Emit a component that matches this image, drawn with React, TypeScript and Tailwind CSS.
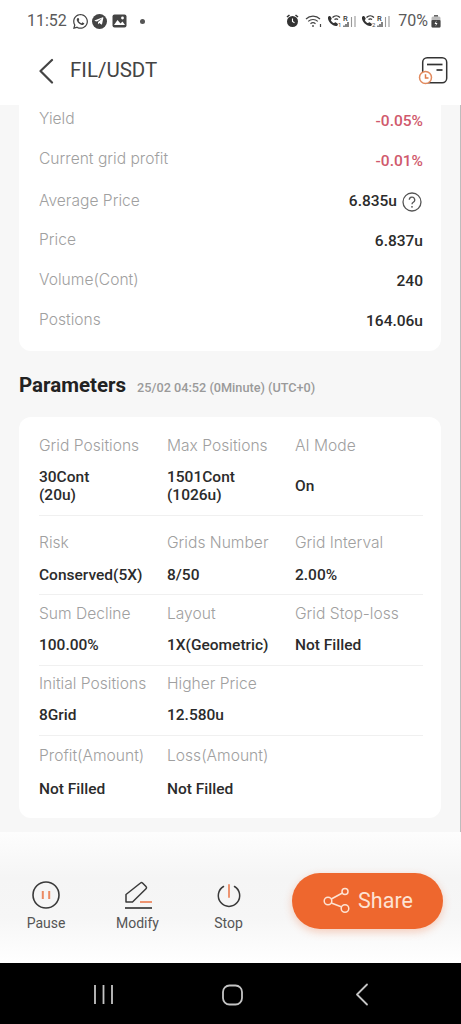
import { FaWhatsapp, FaTelegramPlane } from "react-icons/fa";

const summary = [
    { label: "Yield", value: "-0.05%", red: true, shift: "-mt-[6px]" },
    { label: "Current grid profit", value: "-0.01%", red: true, shift: "-mt-[6px]" },
    { label: "Average Price", value: "6.835u", help: true, shift: "-mt-[2px]" },
    { label: "Price", value: "6.837u", shift: "-mt-[4px]" },
    { label: "Volume(Cont)", value: "240", shift: "-mt-[4px]" },
    { label: "Postions", value: "164.06u", shift: "-mt-[4px]" },
];

const Label = ({ children }: { children: string }) => (
    <div className="h-5 text-[15.6px] leading-5 font-light text-[#a0a0a0] font-['Inter',sans-serif] whitespace-nowrap">{children}</div>
);

const Value = ({ children }: { children: string }) => (
    <div className="h-5 text-[15.5px] leading-5 font-medium text-[#2b2b2b] whitespace-nowrap">{children}</div>
);

const Cell = ({ label, value, gap }: { label: string; value: string; gap: string }) => (
    <div className="flex flex-col">
        <Label>{label}</Label>
        <div className={gap}>
            <Value>{value}</Value>
        </div>
    </div>
);

const Call = ({ n, className }: { n: string; className: string }) => (
    <svg width="31" height="14" viewBox="0 0 31 14" className={className}>
        <path d="M1 3.2C1.5 2 3 1.6 3.6 2.6l1 1.7c.3.5.1 1-.5 1.4-.3.3-.3.6 0 1.1.6 1 1.3 1.7 2.3 2.2.5.2.8.1 1-.2.5-.6 1-.7 1.5-.4l1.500 1c.9.7.5 2-.6 2.500C6.500 12.800.2 7.500 1 3.200z" fill="#333" />
        <path d="M5.500 3.400a5.500 5.500 0 0 1 7.500 0M7.500 5.600a2.800 2.800 0 0 1 3.500 0" stroke="#333" strokeWidth="1.300" fill="none" />
        <text x="11" y="13" fontSize="6" fill="#444" fontFamily="Roboto">{n}</text>
        <text x="16" y="6.500" fontSize="7.500" fontWeight="500" fill="#333" fontFamily="Roboto">R</text>
        <path d="M17 13v-1.500M19 13v-3M21 13V8" stroke="#333" strokeWidth="1.200" />
        <path d="M24.500 13V3M28 13V2" stroke="#999" strokeWidth="1.100" />
    </svg>
);

const StatusBar = () => (
    <div className="h-[42px] flex items-center justify-between pl-[27px] pr-[20px] text-[#555]">
        <div className="flex items-center">
            <span className="text-[16px] leading-none text-[#5a5a5a]">11:52</span>
            <FaWhatsapp className="ml-[5px] text-[17px] text-[#444]" />
            <span className="ml-[3px] w-[15px] h-[15px] rounded-full bg-[#444] flex items-center justify-center">
                <FaTelegramPlane className="text-[10px] text-white" />
            </span>
            <svg width="15" height="14" viewBox="0 0 15 14" className="ml-[5px]">
                <rect x="0.5" y="0.5" width="14" height="13" rx="2" fill="#444" />
                <circle cx="10.5" cy="4" r="1.4" fill="#fff" />
                <path d="M2 11l3.5-5 3 3.5 2-2L13 11z" fill="#fff" />
            </svg>
            <span className="ml-[13px] w-[5px] h-[5px] rounded-full bg-[#555]" />
        </div>
        <div className="flex items-center">
            <svg width="13" height="14" viewBox="0 0 13 14">
                <circle cx="6.5" cy="7.5" r="5.5" fill="#333" />
                <path d="M1 3l2.5-2M12 3L9.5 1" stroke="#333" strokeWidth="1.6" />
                <path d="M6.5 4.5v3l2 1.2" stroke="#fff" strokeWidth="1.1" fill="none" />
            </svg>
            <svg width="18" height="14" viewBox="0 0 18 14" fill="none" stroke="#444" strokeWidth="1.2" className="ml-[6px]">
                <path d="M1 5a10 10 0 0 1 14 0M3.200 7.400a7 7 0 0 1 9.600 0M5.500 9.800a3.800 3.800 0 0 1 5 0" />
                <circle cx="8" cy="12" r="0.9" fill="#444" stroke="none" />
                <path d="M15.500 10v3" />
            </svg>
            <Call n="1" className="ml-[4px]" />
            <Call n="2" className="ml-[3px]" />
            <span className="ml-[6px] text-[16px] leading-none text-[#5a5a5a]">70%</span>
            <svg width="10" height="13" viewBox="0 0 10 13" className="ml-[3px]">
                <rect x="3" y="0" width="4" height="2" fill="#666" />
                <rect x="0.5" y="1.500" width="9" height="11" rx="1.500" fill="#bbb" />
                <rect x="0.5" y="5" width="9" height="7.500" rx="1" fill="#444" />
                <path d="M5.500 5.500L3.500 9h1.500l-.5 2.500L6.500 8H5z" fill="#fff" />
            </svg>
        </div>
    </div>
);

const Header = () => (
    <div className="h-[63px] flex items-center justify-between pl-[38px] pr-[13px] pb-[6px]">
        <div className="flex items-center">
            <svg width="16" height="26" viewBox="0 0 16 26" fill="none" stroke="#444" strokeWidth="2.2" strokeLinecap="round" strokeLinejoin="round">
                <path d="M14 2L2.500 13 14 24.500" />
            </svg>
            <span className="ml-[16px] text-[20.5px] leading-none text-[#444]">FIL/USDT</span>
        </div>
        <svg width="30" height="30" viewBox="0 0 30 30" fill="none">
            <rect x="4.700" y="1.700" width="24" height="25" rx="4.500" stroke="#333" strokeWidth="1.5" />
            <path d="M9 8.500h15.500" stroke="#333" strokeWidth="1.7" />
            <path d="M18.500 14h6" stroke="#333" strokeWidth="1.7" />
            <circle cx="7.500" cy="21.500" r="6" fill="#fff" stroke="#e28a5e" strokeWidth="1.5" />
            <path d="M7.500 18.300v3.600h3" stroke="#e07c4a" strokeWidth="1.5" />
        </svg>
    </div>
);

const Footer = () => (
    <div className="h-[131px] flex items-start bg-[linear-gradient(180deg,#fdfdfd_0%,#f5f5f5_35%,#f6f6f6_65%,#ffffff_100%)]">
        <div className="mt-[49px] w-[92px] flex flex-col items-center">
            <svg width="30" height="30" viewBox="0 0 30 30" fill="none">
                <circle cx="15" cy="14" r="13" stroke="#3a3a3a" strokeWidth="1.6" />
                <path d="M11.800 10v8M18.200 10v8" stroke="#ec8a63" strokeWidth="2" />
            </svg>
            <span className="mt-[4px] text-[14px] leading-4 text-[#555]">Pause</span>
        </div>
        <div className="mt-[49px] w-[91px] flex flex-col items-center">
            <svg width="30" height="30" viewBox="0 0 30 30" fill="none">
                <path d="M3 21v-7.500L17.500 2a1.500 1.500 0 0 1 2 0l3.500 3.500a1.500 1.500 0 0 1 0 2.200L9.500 21z" stroke="#3a3a3a" strokeWidth="1.5" strokeLinejoin="round" />
                <path d="M17 21h12" stroke="#ec8a63" strokeWidth="1.8" />
                <path d="M2 27h27" stroke="#3a3a3a" strokeWidth="1.7" />
            </svg>
            <span className="mt-[4px] text-[14px] leading-4 text-[#555]">Modify</span>
        </div>
        <div className="mt-[49px] w-[91px] flex flex-col items-center">
            <svg width="30" height="30" viewBox="0 0 30 30" fill="none">
                <path d="M9.500 5.500a10.700 10.700 0 1 0 11 0" stroke="#3a3a3a" strokeWidth="1.5" strokeLinecap="round" />
                <path d="M15 4v12" stroke="#ec8a63" strokeWidth="1.8" strokeLinecap="round" />
            </svg>
            <span className="mt-[4px] text-[14px] leading-4 text-[#555]">Stop</span>
        </div>
        <div className="ml-[18px] mt-[41px] w-[151px] h-[56px] rounded-full bg-[#ee672e] shadow-[0_3px_8px_rgba(238,103,46,0.3)] flex items-center justify-center">
            <svg width="30" height="30" viewBox="0 0 30 30" fill="none" stroke="#fde3d3" strokeWidth="1.5">
                <circle cx="6" cy="15" r="3.800" />
                <circle cx="23" cy="5.500" r="3" />
                <circle cx="23" cy="22.500" r="3.800" />
                <path d="M9.300 13L20.400 7M9.300 17L19.800 21" />
            </svg>
            <span className="ml-[6px] text-[21.5px] leading-none text-[#fde3d3]">Share</span>
        </div>
    </div>
);

const NavBar = () => (
    <div className="h-[61px] bg-black flex items-center">
        <svg width="461" height="30" viewBox="0 0 461 30" fill="none" stroke="#c4c4c4" strokeWidth="1.8">
            <path d="M95 6v19M103.500 6v19M112 6v19" />
            <rect x="223" y="6.500" width="19" height="19" rx="6.500" />
            <path d="M367 5.500L357 15.500 367 25.500" strokeLinecap="round" strokeLinejoin="round" />
        </svg>
    </div>
);

export default function App() {
    return (
        <div className="h-[1024px] w-[461px] flex flex-col overflow-hidden bg-white font-['Roboto',sans-serif]">
            <StatusBar />
            <Header />
            <main className="h-[727px] w-[461px] bg-[#f7f7f7] pl-[19px] pr-[19px] overflow-hidden border-r border-[#bdbdbd]">
                <section className="-mt-[3px] h-[249px] bg-white rounded-b-xl pl-5 pr-[18px]">
                    {summary.map((row) => (
                        <div key={row.label} className="h-10 flex items-center justify-between">
                            <span className={`${row.shift} text-[15.6px] font-light text-[#a0a0a0] font-['Inter',sans-serif]`}>{row.label}</span>
                            <span className={`flex items-center text-[15.5px] font-medium ${row.red ? "text-[#d0596c]" : "text-[#2b2b2b]"}`}>
                                {row.value}
                                {row.help && (
                                    <svg width="20" height="20" viewBox="0 0 20 20" fill="none" className="ml-[5px] mr-px">
                                        <circle cx="10" cy="10" r="9" stroke="#555" strokeWidth="1.3" />
                                        <path d="M7.300 7.800a2.700 2.700 0 1 1 4 2.400c-.9.5-1.300 1-1.300 2" stroke="#555" strokeWidth="1.3" />
                                        <circle cx="10" cy="14.800" r="0.900" fill="#555" />
                                    </svg>
                                )}
                            </span>
                        </div>
                    ))}
                </section>
                <div className="h-[66px] flex items-center pt-[2px]">
                    <h2 className="text-[20.5px] font-bold text-[#222]">Parameters</h2>
                    <span className="ml-[11px] mt-[5px] text-[12.7px] font-medium text-[#9a9a9a]">25/02 04:52 (0Minute) (UTC+0)</span>
                </div>
                <section className="h-[401px] bg-white rounded-xl pl-5 pr-[18px] pt-[19px]">
                    <div className="grid grid-cols-3 pb-[10px] border-b border-[#f0f0f0]">
                        <div className="flex flex-col">
                            <Label>Grid Positions</Label>
                            <div className="mt-[12px] text-[15.5px] leading-[18px] font-medium text-[#2b2b2b]">30Cont<br />(20u)</div>
                        </div>
                        <div className="flex flex-col">
                            <Label>Max Positions</Label>
                            <div className="mt-[12px] text-[15.5px] leading-[18px] font-medium text-[#2b2b2b]">1501Cont<br />(1026u)</div>
                        </div>
                        <div className="flex flex-col">
                            <Label>AI Mode</Label>
                            <div className="mt-[13px] h-9 flex items-center text-[15.5px] font-medium text-[#2b2b2b]">On</div>
                        </div>
                    </div>
                    <div className="grid grid-cols-3 pt-[17px] pb-[9px] border-b border-[#f0f0f0]">
                        <Cell label="Risk" value="Conserved(5X)" gap="mt-3" />
                        <Cell label="Grids Number" value="8/50" gap="mt-3" />
                        <Cell label="Grid Interval" value="2.00%" gap="mt-3" />
                    </div>
                    <div className="grid grid-cols-3 pt-[9px] pb-[10px] border-b border-[#f0f0f0]">
                        <Cell label="Sum Decline" value="100.00%" gap="mt-[11px]" />
                        <Cell label="Layout" value="1X(Geometric)" gap="mt-[11px]" />
                        <Cell label="Grid Stop-loss" value="Not Filled" gap="mt-[11px]" />
                    </div>
                    <div className="grid grid-cols-3 pt-2 pb-[10px] border-b border-[#f0f0f0]">
                        <Cell label="Initial Positions" value="8Grid" gap="mt-[11px]" />
                        <Cell label="Higher Price" value="12.580u" gap="mt-[11px]" />
                    </div>
                    <div className="grid grid-cols-3 pt-[10px]">
                        <Cell label="Profit(Amount)" value="Not Filled" gap="mt-[13px]" />
                        <Cell label="Loss(Amount)" value="Not Filled" gap="mt-[13px]" />
                    </div>
                </section>
            </main>
            <Footer />
            <NavBar />
        </div>
    );
}
